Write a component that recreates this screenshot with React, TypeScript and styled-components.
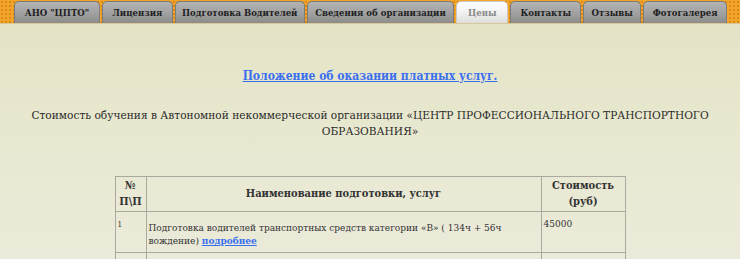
import styled, { createGlobalStyle } from "styled-components";

const serif = `"DejaVu Serif Condensed", "DejaVu Serif", serif`;

const GlobalStyle = createGlobalStyle`
  html, body {
    margin: 0;
    padding: 0;
  }
  body {
    font-family: ${serif};
    font-stretch: condensed;
    background: linear-gradient(180deg, #e3e2c4 0%, #e8e8d0 45%, #ecebdd 100%);
    min-height: 259px;
    color: #333;
  }
`;

const TopBar = styled.nav`
  display: flex;
  align-items: flex-end;
  gap: 2px;
  height: 24px;
  padding: 0 13px 0 14px;
  background-color: #f2a52a;
  background-image: radial-gradient(#d98a14 1px, transparent 1.3px);
  background-size: 4px 4px;
  border-bottom: 1px solid #d9c896;
  box-sizing: border-box;
`;

const Tab = styled.a<{ $active?: boolean; $w: number }>`
  display: flex;
  align-items: center;
  justify-content: center;
  width: ${(p) => p.$w}px;
  height: 22px;
  box-sizing: border-box;
  border: 1px solid ${(p) => (p.$active ? "#c9c9c9" : "#7b7b7b")};
  border-bottom: none;
  border-radius: 5px 5px 0 0;
  background: ${(p) =>
    p.$active
      ? "linear-gradient(180deg, #ffffff 0%, #f1f1f1 50%, #dedede 100%)"
      : "linear-gradient(180deg, #b4b4b4 0%, #a2a2a2 50%, #8c8c8c 100%)"};
  color: ${(p) => (p.$active ? "#888" : "#1e1e1e")};
  font-size: 9.5px;
  font-weight: bold;
  white-space: nowrap;
  text-decoration: none;
`;

const Main = styled.main`
  padding: 41px 26px 0;
  text-align: center;
`;

const DocLink = styled.a`
  display: inline-block;
  color: #3a6ff0;
  font-weight: bold;
  font-size: 12px;
  text-decoration: underline;
`;

const Intro = styled.p`
  margin: 23px 0 0;
  font-size: 11.8px;
  line-height: 16px;
  color: #2a2a2a;
`;

const Table = styled.table`
  margin: 37px auto 0;
  width: 511px;
  border-collapse: collapse;
  border: 1px solid #a9a9a0;
  font-family: ${serif};
  font-stretch: condensed;
  font-size: 10px;
  color: #333;
  text-align: left;
`;

const Th = styled.th<{ $w?: number }>`
  border: 1px solid #a9a9a0;
  padding: 1px 3px;
  text-align: center;
  font-weight: bold;
  font-size: 11px;
  line-height: 16px;
  width: ${(p) => (p.$w ? `${p.$w}px` : "auto")};
`;

const Td = styled.td`
  border: 1px solid #a9a9a0;
  padding: 5px 2px;
  vertical-align: top;
  line-height: 13px;
  height: 30px;
`;

const Small = styled.span`
  font-size: 8px;
`;

const Desc = styled.p`
  margin: 4px 0 0;
  line-height: 13px;
`;

const More = styled.a`
  color: #3a6ff0;
  font-weight: bold;
  text-decoration: underline;
`;

const tabs: { label: string; w: number; active?: boolean }[] = [
  { label: 'АНО "ЦПТО"', w: 86 },
  { label: "Лицензия", w: 71 },
  { label: "Подготовка Водителей", w: 130 },
  { label: "Сведения об организации", w: 148 },
  { label: "Цены", w: 52, active: true },
  { label: "Контакты", w: 71 },
  { label: "Отзывы", w: 58 },
  { label: "Фотогалерея", w: 84 },
];

const App = () => {
  return (
    <>
      <GlobalStyle />
      <TopBar>
        {tabs.map((t) => (
          <Tab key={t.label} $w={t.w} $active={t.active}>
            {t.label}
          </Tab>
        ))}
      </TopBar>
      <Main>
        <DocLink href="#">Положение об оказании платных услуг.</DocLink>
        <Intro>
          Стоимость обучения в Автономной некоммерческой организации «ЦЕНТР
          ПРОФЕССИОНАЛЬНОГО ТРАНСПОРТНОГО ОБРАЗОВАНИЯ»
        </Intro>
        <Table>
          <thead>
            <tr>
              <Th $w={24}>
                №
                <br />
                П\П
              </Th>
              <Th>Наименование подготовки, услуг</Th>
              <Th $w={77}>
                Стоимость
                <br />
                (руб)
              </Th>
            </tr>
          </thead>
          <tbody>
            <tr>
              <Td>
                <Small>1</Small>
              </Td>
              <Td>
                <Desc>
                  Подготовка водителей транспортных средств категории «В» ( 134ч
                  + 56ч вождение) <More href="#">подробнее</More>
                </Desc>
              </Td>
              <Td>45000</Td>
            </tr>
            <tr>
              <Td>&nbsp;</Td>
              <Td>&nbsp;</Td>
              <Td>&nbsp;</Td>
            </tr>
          </tbody>
        </Table>
      </Main>
    </>
  );
};

export default App;
